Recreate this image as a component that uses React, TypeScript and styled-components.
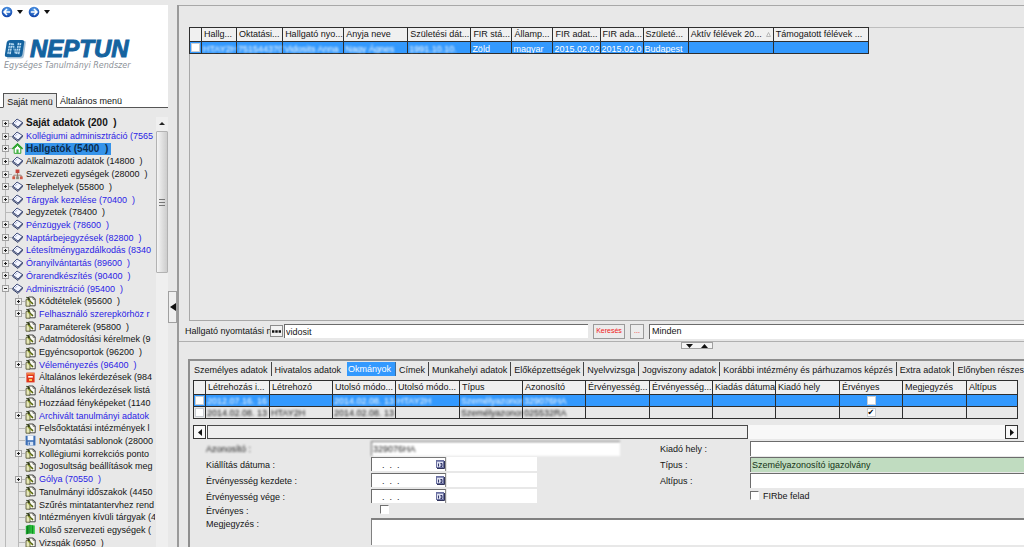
import React from 'react';
import styled, { createGlobalStyle, css } from 'styled-components';

const GlobalStyle = createGlobalStyle`
  * { box-sizing: border-box; }
  html, body { margin: 0; padding: 0; overflow: hidden; }
  body, button, input, select, textarea {
    font-family: "Liberation Sans", Arial, sans-serif;
    font-size: 9px;
    color: #141414;
  }
  body { background: #e8e8e8; }
  button, input, select, textarea { margin: 0; padding: 0; border: 0; border-radius: 0; outline: 0; }
  button { cursor: pointer; background: none; }
`;

const Shell = styled.div`
  display: flex;
  height: 100vh;
  overflow: hidden;
`;

/* ---------- sidebar ---------- */

const Sidebar = styled.aside`
  width: 168px;
  flex: none;
  display: flex;
  flex-direction: column;
  overflow: hidden;
`;

const Brand = styled.header`
  margin-top: 5px;
  height: 88px;
  background: #fff;
`;

const History = styled.div`
  display: flex;
  align-items: center;
  gap: 4px;
  padding: 1px 0 0 1px;
`;

const HistoryButton = styled.button`
  display: flex;
  align-items: center;
  gap: 4px;
  width: 23px;
  height: 12px;
`;

const Logo = styled.div`
  display: flex;
  align-items: center;
  gap: 4px;
  margin: 18px 0 0 4px;
  height: 26px;
`;

const LogoName = styled.span`
  font-size: 24px;
  line-height: 26px;
  font-weight: bold;
  font-style: italic;
  color: #14639f;
  -webkit-text-stroke: 1px #14639f;
`;

const Tagline = styled.div`
  margin-left: 4px;
  font-family: "DejaVu Sans", sans-serif;
  font-size: 8px;
  line-height: 8px;
  font-style: italic;
  color: #8d9299;
  white-space: nowrap;
`;

const MenuTabs = styled.div`
  display: flex;
  height: 15px;
  background: #fff;
  &::before { content: ''; width: 3px; border-bottom: 1px solid #555; }
  &::after { content: ''; flex: 1; border-bottom: 1px solid #555; }
`;

const MenuTab = styled.button<{ $active?: boolean }>`
  padding: 2px 3px 0;
  font-size: 9px;
  line-height: 12px;
  white-space: nowrap;
  border-bottom: 1px solid #555;
  ${p => p.$active && css`
    width: 54px;
    background: #e8e8e8;
    border: 1px solid #555;
    border-bottom-color: #e8e8e8;
  `}
`;

const TreeArea = styled.div`
  display: flex;
  flex: 1;
  min-height: 0;
  padding-top: 9px;
  overflow: hidden;
`;

const Tree = styled.ul`
  display: grid;
  grid-auto-rows: 1fr;
  height: 432px;
  width: 155px;
  margin: 0;
  padding: 0;
  list-style: none;
  overflow: hidden;
  background: linear-gradient(#b9b9b9, #b9b9b9) 5px 6px / 1px 100% no-repeat;
`;

const TreeItem = styled.li<{ $level: number }>`
  display: flex;
  align-items: center;
  min-height: 0;
  padding-left: ${p => (p.$level ? 15 : 2)}px;
  white-space: nowrap;
  ${p => p.$level > 0 && css`background: linear-gradient(#b9b9b9, #b9b9b9) 18px 0 / 1px 100% no-repeat;`}
`;

const Expander = styled.span<{ $kind: string }>`
  display: flex;
  flex: none;
  width: 10px;
  height: 7px;
  ${p => p.$kind === '' && css`
    &::before { content: ''; width: 6px; margin-left: 4px; height: 1px; margin-top: 3px; background: #b9b9b9; }
  `}
`;

const TreeIcon = styled.span`
  display: flex;
  flex: none;
  width: 11px;
  height: 11px;
  margin-right: 2px;
`;

const TreeLabel = styled.a<{ $blue?: boolean; $bold?: boolean; $selected?: boolean }>`
  padding: 0 1px;
  font-size: ${p => (p.$bold ? 10 : 9)}px;
  line-height: 12px;
  font-weight: ${p => (p.$bold ? 'bold' : 'normal')};
  color: ${p => (p.$blue ? '#2a22e6' : '#141414')};
  text-decoration: none;
  white-space: pre;
  ${p => p.$selected && css`padding-right: 3px; background: #3593ea; color: #0b2c4e;`}
`;

const TreeScroll = styled.div`
  display: flex;
  flex-direction: column;
  align-items: center;
  width: 12px;
  margin-left: 1px;
  background: #efefef;
`;

const TreeThumb = styled.div`
  display: flex;
  align-items: center;
  justify-content: center;
  width: 12px;
  height: 142px;
  margin-top: 5px;
  border: 1px solid #b2b2b2;
  border-radius: 1px;
  background: linear-gradient(90deg, #f5f5f5, #dcdcdc 60%, #cdcdcd);
`;

const SplitGutter = styled.div`
  width: 9px;
  flex: none;
  padding-top: 291px;
`;

const SplitButton = styled.button`
  display: flex;
  align-items: center;
  justify-content: center;
  width: 9px;
  height: 32px;
  border: 1px solid #a0a0a0;
  background: #efefef;
`;

/* ---------- main ---------- */

const Main = styled.main`
  flex: 1;
  min-width: 0;
  display: flex;
  flex-direction: column;
  margin-top: 5px;
  border-left: 2px solid #9a9a9a;
  overflow: hidden;
`;

const ResultPane = styled.section`
  flex: 1;
  min-height: 0;
  display: flex;
  flex-direction: column;
  border-top: 1px solid #a8a8a8;
  border-bottom: 1px solid #b0b0b0;
`;

const ResultBox = styled.div`
  flex: 1;
  min-height: 0;
  margin: 21px 0 0 10px;
  border-top: 1px solid #bdbdbd;
  border-left: 1px solid #a8a8a8;
  border-bottom: 1px solid #a8a8a8;
`;

const Grid = styled.table<{ $fill?: boolean }>`
  table-layout: fixed;
  width: ${p => (p.$fill ? '100%' : '680px')};
  margin: ${p => (p.$fill ? '0' : '-1px 0 0 -1px')};
  border-collapse: separate;
  border-spacing: 0;
  border-top: 1px solid #2e2e2e;
  border-left: 1px solid #2e2e2e;
`;

const Th = styled.th`
  height: 14px;
  padding: 0 0 0 2px;
  border-right: 1px solid #2e2e2e;
  border-bottom: 1px solid #2e2e2e;
  background: #f0f0f0;
  font-weight: normal;
  text-align: left;
  line-height: 13px;
  white-space: nowrap;
  overflow: hidden;
`;

const HeadInner = styled.span`
  display: flex;
  align-items: center;
  gap: 4px;
`;

const Tr = styled.tr<{ $selected?: boolean }>`
  background: ${p => (p.$selected ? '#3399fe' : '#e8e8e8')};
  color: ${p => (p.$selected ? '#fff' : '#141414')};
`;

const Td = styled.td`
  height: 12px;
  padding: 0;
  border-right: 1px solid #2e2e2e;
  border-bottom: 1px solid #2e2e2e;
`;

const CellText = styled.div<{ $blur?: boolean; $low?: boolean }>`
  height: 11px;
  padding: ${p => (p.$low ? '2px 0 0 1px' : '1px 0 0 1px')};
  line-height: 11px;
  white-space: nowrap;
  overflow: hidden;
  ${p => p.$blur && css`filter: blur(1px);`}
`;

const CheckCell = styled.div`
  display: flex;
  justify-content: center;
  align-items: center;
  height: 11px;
`;

const Check = styled.input.attrs({ type: 'checkbox' })<{ $sunken?: boolean }>`
  appearance: none;
  display: block;
  width: 9px;
  height: 9px;
  background: #fff;
  border: 1px solid #c9cdd2;
  ${p => p.$sunken && css`
    border-color: #707070 #fff #fff #707070;
  `}
  &:checked::after {
    content: '✔';
    display: block;
    font: 8px/7px "DejaVu Sans", sans-serif;
    color: #000;
  }
`;

const SearchRow = styled.form`
  display: flex;
  align-items: center;
  height: 20px;
  padding-left: 6px;
`;

const SearchLabel = styled.label`
  width: 85px;
  white-space: nowrap;
  line-height: 12px;
`;

const DotsButton = styled.button`
  display: flex;
  align-items: center;
  justify-content: center;
  width: 13px;
  height: 12px;
  margin-right: 1px;
  border: 1px solid #8c8c8c;
  background: #f2f2f2;
`;

const field = css`
  height: 14px;
  border-top: 1px solid #6c6c6c;
  border-left: 1px solid #6c6c6c;
  background: #fff;
  line-height: 13px;
`;

const SearchInput = styled.input`
  ${field}
  width: 304px;
  padding-left: 1px;
`;

const SearchButton = styled.button<{ $wide?: boolean }>`
  width: ${p => (p.$wide ? 32 : 14)}px;
  height: 15px;
  margin-left: 5px;
  border: 1px solid #9a9a9a;
  background: #ececec;
  color: #f01818;
  font-size: 7px;
  line-height: 12px;
  white-space: nowrap;
`;

const ScopeSelect = styled.select`
  ${field}
  appearance: none;
  flex: 1;
  min-width: 0;
  height: 15px;
  margin-left: 5px;
  padding-left: 2px;
`;

const FoldBar = styled.div`
  display: flex;
  height: 7px;
  margin: 0 0 10px 502px;
`;

const FoldButton = styled.button`
  display: flex;
  align-items: center;
  justify-content: center;
  width: 16px;
  height: 7px;
  border: 1px solid #a0a0a0;
  border-right-width: 0;
  background: #f4f4f4;
  & + & { border-left-width: 0; border-right-width: 1px; }
`;

const DetailPane = styled.section`
  margin-left: 9px;
  padding-bottom: 2px;
  border-top: 2px solid #8e8e8e;
  border-left: 2px solid #8e8e8e;
`;

const DetailTabs = styled.nav`
  display: flex;
  height: 19px;
  padding: 1px 0 4px 1px;
  overflow: hidden;
`;

const DetailTab = styled.button<{ $active?: boolean; $bare?: boolean }>`
  flex: none;
  display: flex;
  align-items: center;
  height: 14px;
  padding: 1px 3px 0;
  line-height: 12px;
  white-space: nowrap;
  border-right: 1px solid ${p => (p.$bare ? 'transparent' : '#444')};
  ${p => p.$active && css`
    width: 49px;
    margin-left: 2px;
    padding: 0 0 1px 1px;
    background: #3399fe;
    color: #fff;
    border-right: 1px solid #3c6c9c;
  `}
`;

const DetailBody = styled.div`
  padding: 0 6px 0 3px;
`;

const HScroll = styled.div`
  display: flex;
  height: 14px;
  margin: 6px 6px 2px 3px;
  background: #f8f8f8;
`;

const HScrollButton = styled.button`
  display: flex;
  align-items: center;
  justify-content: center;
  width: 13px;
  height: 14px;
  border: 1px solid #333;
  background: #f8f8f8;
`;

const HScrollTrack = styled.div`
  flex: 1;
  padding-right: 257px;
`;

const HScrollThumb = styled.div`
  height: 14px;
  margin-left: 1px;
  border: 1px solid #4a4a4a;
  background: #efefef;
`;

const Form = styled.form`
  display: grid;
  grid-template-columns: 454px 1fr;
  padding-left: 16px;
`;

const FormColumn = styled.div`
  display: flex;
  flex-direction: column;
`;

const FormRow = styled.div<{ $wide?: boolean; $tight?: boolean }>`
  display: flex;
  align-items: flex-start;
  height: ${p => (p.$wide ? 27 : p.$tight ? 13 : 16)}px;
  ${p => p.$wide && css`grid-column: 1 / -1;`}
`;

const FormLabel = styled.label<{ $right?: boolean; $blur?: boolean; $flush?: boolean }>`
  flex: none;
  width: ${p => (p.$right ? 90 : 165)}px;
  padding-top: ${p => (p.$flush ? 0 : 2)}px;
  line-height: 13px;
  white-space: nowrap;
  ${p => p.$blur && css`filter: blur(1px);`}
`;

const TextField = styled.input<{ $green?: boolean; $blur?: boolean; $width?: number }>`
  ${field}
  ${p => (p.$width ? css`width: ${p.$width}px;` : css`flex: 1; min-width: 0;`)}
  height: 15px;
  padding-left: 1px;
  ${p => p.$green && css`background: #c0dcc0; color: #143214;`}
  ${p => p.$blur && css`filter: blur(1px);`}
`;

const DateField = styled.span`
  ${field}
  display: flex;
  align-items: center;
  width: 75px;
  border-right: 1px solid #8a8a8a;
`;

const DateInput = styled.input`
  flex: 1;
  min-width: 0;
  padding-left: 10px;
  background: transparent;
`;

const CalendarButton = styled.button`
  display: flex;
  width: 9px;
  height: 9px;
`;

const DateNote = styled.output`
  width: 90px;
  height: 14px;
  margin-left: 1px;
  background: #fff;
`;

const CheckLabel = styled.label`
  display: flex;
  align-items: center;
  gap: 4px;
  height: 13px;
`;

const CheckSlot = styled.div`
  padding: 0 0 0 9px;
`;

const Notes = styled.textarea`
  ${field}
  flex: 1;
  min-width: 0;
  height: 27px;
  resize: none;
  border-top-width: 2px;
  border-color: #808080;
`;

/* ---------- drawings ---------- */

const Arrow = ({ dir, w = 6, h = 4 }: { dir: 'up' | 'down' | 'left' | 'right'; w?: number; h?: number }) => {
  const points = {
    up: `0,${h} ${w},${h} ${w / 2},0`,
    down: `0,0 ${w},0 ${w / 2},${h}`,
    left: `${w},0 ${w},${h} 0,${h / 2}`,
    right: `0,0 0,${h} ${w},${h / 2}`,
  }[dir];
  return <svg width={w} height={h}><polygon points={points} fill="#111" /></svg>;
};

const BallArrow = ({ flip }: { flip?: boolean }) => (
  <svg width="12" height="12" viewBox="0 0 12 12">
    <defs>
      <radialGradient id={flip ? 'ballB' : 'ballA'} cx="50%" cy="30%" r="70%">
        <stop offset="0" stopColor="#5aa6f0" />
        <stop offset="1" stopColor="#0c3fa8" />
      </radialGradient>
    </defs>
    <circle cx="6" cy="6" r="5.3" fill={`url(#${flip ? 'ballB' : 'ballA'})`} />
    <path
      transform={flip ? 'translate(12 0) scale(-1 1)' : undefined}
      d="M6 3 L3 6 L6 9 M3.2 6 H9.2" stroke="#fff" strokeWidth="1.5" fill="none"
    />
  </svg>
);

const LogoMark = () => (
  <svg width="22" height="20" viewBox="0 0 22 20">
    <path d="M5 2 H21 Q22 2 21.8 4 L20 17 Q19.7 19.5 17 19.5 H3 Z" fill="#a9c3d8" />
    <path d="M6 1 H18 Q20.6 1 20.2 3.5 L18.4 15.5 Q18 18 15.5 18 H3 Q.5 18 .9 15.5 L2.7 3.5 Q3.2 1 6 1 Z" fill="#14639f" />
    <path d="M7 4 L5 15 M15.6 4 L13.6 15" stroke="#bfe0f5" strokeWidth="3.6" fill="none" />
    <path d="M8.6 4.6 L12 14.4" stroke="#a6d0ec" strokeWidth="2.4" fill="none" />
    <path d="M3 6.5 H18 M3 9.3 H18 M3 12.1 H18" stroke="#14639f" strokeWidth=".7" />
    <path d="M7 3.6 L4.8 15.4 M11.4 3.6 L9.2 15.4 M15.7 3.6 L13.5 15.4" stroke="#14639f" strokeWidth=".6" />
  </svg>
);

const icons: Record<string, React.ReactNode> = {
  book: (
    <>
      <path d="M.8 5.2 L5 1 L10.4 4.4 L6 9 Z" fill="#f4f6ff" stroke="#43507c" strokeWidth="1" />
      <path d="M.8 5.2 V6.6 L6 10.4 L10.4 5.8 V4.4" fill="none" stroke="#27345f" strokeWidth="1" />
      <path d="M3 5.2 L5.3 2.9" stroke="#9aa6d0" strokeWidth=".8" />
    </>
  ),
  home: (
    <>
      <path d="M2.2 5.5 V10.3 H8.8 V5.5 L5.5 2.5 Z" fill="#fff" stroke="#2fa32f" strokeWidth="1" />
      <path d="M.4 6 L5.5 1 L10.6 6" fill="none" stroke="#23a023" strokeWidth="1.5" />
      <rect x="4.4" y="6.4" width="2.2" height="4" fill="#4ab84a" />
    </>
  ),
  org: (
    <>
      <rect x="3.6" y=".5" width="3.8" height="3.6" fill="#c4433a" />
      <path d="M5.5 4 V6.2 M1.8 8 V6.2 H9.2 V8 M5.5 6 V8" stroke="#8a6a5a" fill="none" strokeWidth=".8" />
      <rect x=".3" y="7.4" width="2.8" height="2.8" fill="#d05a48" />
      <rect x="4.1" y="7.4" width="2.8" height="2.8" fill="#8a8a7a" />
      <rect x="7.9" y="7.4" width="2.8" height="2.8" fill="#d05a48" />
    </>
  ),
  doc: (
    <>
      <path d="M3.6 1 H8.2 L10.2 3 V9.8 H3.6 Z" fill="#fbfbf2" stroke="#333" strokeWidth=".9" />
      <path d="M8 1 V3.2 H10.2" fill="none" stroke="#333" strokeWidth=".7" />
      <path d="M1 3.6 H5 V10.2 H1 Z" fill="#e6e8b8" stroke="#4a4a2a" strokeWidth=".8" />
      <path d="M1.4 1.4 L4 2.4 L3.8 4.4 L8 7.8" fill="none" stroke="#2e3a10" strokeWidth="1.5" />
      <path d="M3.4 4 L7.4 8.2" stroke="#b8c832" strokeWidth="1" />
    </>
  ),
  red: (
    <>
      <rect x="1.4" y=".6" width="8.2" height="9.8" fill="#e0351c" />
      <rect x="2" y="1" width="7" height="1.6" fill="#f28a4a" />
      <rect x="3.2" y="4" width="4.6" height="1.6" fill="#fff" />
      <rect x="4" y="7" width="3" height="2" fill="#ffc24a" />
    </>
  ),
  disk: (
    <>
      <path d="M.6 .8 H10.4 V10.4 H1.8 L.6 9.2 Z" fill="#3d6fb5" />
      <rect x="2.6" y=".8" width="5.8" height="4.4" fill="#f4f8ff" />
      <rect x="2.8" y="6.8" width="5.4" height="3.6" fill="#d5e2f4" />
      <rect x="3.6" y="7.4" width="1.4" height="2.4" fill="#3d6fb5" />
    </>
  ),
  green: (
    <>
      <path d="M.8 2 L4.6 .8 V9.6 L.8 10.4 Z" fill="#19a52c" />
      <path d="M4.6 .8 L9.8 1.6 V10 L4.6 9.6 Z" fill="#2cc43e" />
      <path d="M2.6 1.6 V10 M4.8 1 V9.6 M7.4 1.4 V9.8" stroke="#0c6a1a" strokeWidth=".7" />
    </>
  ),
};

const Icon = ({ name }: { name: string }) => (
  <svg width="11" height="11" viewBox="0 0 11 11">{icons[name]}</svg>
);

const ExpanderMark = ({ kind }: { kind: string }) =>
  kind ? (
    <svg width="10" height="7" viewBox="0 0 10 7">
      <rect x=".5" y=".5" width="6" height="6" fill="#f0f0f0" stroke="#a0a0a0" />
      <path d={kind === '+' ? 'M2 3.5 H5 M3.5 2 V5' : 'M2 3.5 H5'} stroke="#222" />
      <path d="M7 3.5 H10" stroke="#b9b9b9" />
    </svg>
  ) : null;

const Calendar = () => (
  <svg width="9" height="9" viewBox="0 0 9 9">
    <rect x=".5" y=".5" width="7" height="7" fill="#dfe2f2" stroke="#6a70a0" />
    <path d="M1 1.5 H7" stroke="#8a90ba" />
    <path d="M2.5 3.5 V6.5 M4.4 3.5 H6 V6.5 H4.4 M4.6 5 H6" stroke="#20245a" fill="none" strokeWidth=".9" />
    <path d="M8.5 1 V8.5 H1" stroke="#30335a" fill="none" />
  </svg>
);

/* ---------- data ---------- */

type Node = { t: string; icon?: string; x?: string; blue?: boolean; bold?: boolean; sel?: boolean; sub?: boolean };

const nodes: Node[] = [
  { t: 'Saját adatok (200  )', x: '+', bold: true },
  { t: 'Kollégiumi adminisztráció (7565', x: '+', blue: true },
  { t: 'Hallgatók (5400  )', x: '+', bold: true, sel: true, icon: 'home' },
  { t: 'Alkalmazotti adatok (14800  )', x: '+' },
  { t: 'Szervezeti egységek (28000  )', x: '+', icon: 'org' },
  { t: 'Telephelyek (55800  )', x: '+' },
  { t: 'Tárgyak kezelése (70400  )', x: '+', blue: true },
  { t: 'Jegyzetek (78400  )' },
  { t: 'Pénzügyek (78600  )', x: '+', blue: true },
  { t: 'Naptárbejegyzések (82800  )', x: '+', blue: true },
  { t: 'Létesítménygazdálkodás (8340', x: '+', blue: true },
  { t: 'Óranyilvántartás (89600  )', x: '+', blue: true },
  { t: 'Órarendkészítés (90400  )', x: '+', blue: true },
  { t: 'Adminisztráció (95400  )', x: '-', blue: true },
  { t: 'Kódtételek (95600  )', x: '+', sub: true },
  { t: 'Felhasználó szerepkörhöz r', x: '+', blue: true, sub: true },
  { t: 'Paraméterek (95800  )', sub: true },
  { t: 'Adatmódosítási kérelmek (9', sub: true },
  { t: 'Egyéncsoportok (96200  )', sub: true },
  { t: 'Véleményezés (96400  )', x: '+', blue: true, sub: true },
  { t: 'Általános lekérdezések (984', icon: 'red', sub: true },
  { t: 'Általános lekérdezések listá', sub: true },
  { t: 'Hozzáad fényképeket (1140', sub: true },
  { t: 'Archivált tanulmányi adatok', x: '+', blue: true, sub: true },
  { t: 'Felsőoktatási intézmények l', sub: true },
  { t: 'Nyomtatási sablonok (28000', icon: 'disk', sub: true },
  { t: 'Kollégiumi korrekciós ponto', x: '+', sub: true },
  { t: 'Jogosultság beállítások meg', sub: true },
  { t: 'Gólya (70550  )', x: '+', blue: true, sub: true },
  { t: 'Tanulmányi időszakok (4450', sub: true },
  { t: 'Szűrés mintatantervhez rend', sub: true },
  { t: 'Intézményen kívüli tárgyak (4', sub: true },
  { t: 'Külső szervezeti egységek (', icon: 'green', sub: true },
  { t: 'Vizsgák (6950  )', sub: true },
];

const studentCols: [string, number][] = [
  ['Hallg...', 35], ['Oktatási...', 46], ['Hallgató nyo...', 61], ['Anyja neve', 64],
  ['Születési dát...', 63], ['FIR stá...', 41], ['Államp...', 41], ['FIR adat...', 47],
  ['FIR ada...', 43], ['Születé...', 45], ['Aktív félévek 20...', 85], ['Támogatott félévek ...', 95],
];
const student = ['HTAY2H', '751544370', 'Vidosits Anna', 'Nagy Ágnes', '1991.10.10.', 'Zöld', 'magyar', '2015.02.02', '2015.02.0', 'Budapest', '', ''];

const documentCols: [string, number | undefined][] = [
  ['Létrehozás i...', 64], ['Létrehozó', 63], ['Utolsó módo...', 63], ['Utolsó módo...', 64],
  ['Típus', 63], ['Azonosító', 63], ['Érvényesség...', 64], ['Érvényesség...', 63],
  ['Kiadás dátuma', 63], ['Kiadó hely', 64], ['Érvényes', 63], ['Megjegyzés', 64], ['Altípus', undefined],
];
const documents = [
  { selected: true, valid: false, cells: ['2012.07.16. 16', '', '2014.02.08. 13', 'HTAY2H', 'Személyazonos', '329076HA'] },
  { selected: false, valid: true, cells: ['2014.02.08. 13', 'HTAY2H', '2014.02.08. 13', '', 'Személyazonos', '025532RA'] },
];

const detailTabs = [
  'Személyes adatok', 'Hivatalos adatok', 'Okmányok', 'Címek', 'Munkahelyi adatok', 'Előképzettségek',
  'Nyelvvizsga', 'Jogviszony adatok', 'Korábbi intézmény és párhuzamos képzés', 'Extra adatok', 'Előnyben részesítés',
];

const dateRows = ['Kiállítás dátuma :', 'Érvényesség kezdete :', 'Érvényesség vége :'];

export default function App() {
  return (
    <Shell>
      <GlobalStyle />
      <Sidebar>
        <Brand>
          <History>
            <HistoryButton aria-label="Vissza"><BallArrow /><Arrow dir="down" /></HistoryButton>
            <HistoryButton aria-label="Előre"><BallArrow flip /><Arrow dir="down" /></HistoryButton>
          </History>
          <Logo><LogoMark /><LogoName>NEPTUN</LogoName></Logo>
          <Tagline>Egységes Tanulmányi Rendszer</Tagline>
        </Brand>
        <MenuTabs>
          <MenuTab $active>Saját menü</MenuTab>
          <MenuTab>Általános menü</MenuTab>
        </MenuTabs>
        <TreeArea>
          <Tree>
            {nodes.map((n, i) => (
              <TreeItem key={i} $level={n.sub ? 1 : 0}>
                <Expander $kind={n.x ?? ''}><ExpanderMark kind={n.x ?? ''} /></Expander>
                <TreeIcon><Icon name={n.icon ?? (n.sub ? 'doc' : 'book')} /></TreeIcon>
                <TreeLabel href="#" $blue={n.blue} $bold={n.bold} $selected={n.sel}>{n.t}</TreeLabel>
              </TreeItem>
            ))}
          </Tree>
          <TreeScroll>
            <svg width="6" height="9"><polygon points="0,8 6,8 3,5" fill="#222" /></svg>
            <TreeThumb>
              <svg width="6" height="7"><path d="M0 .5 H6 M0 3.5 H6 M0 6.5 H6" stroke="#777" /></svg>
            </TreeThumb>
          </TreeScroll>
        </TreeArea>
      </Sidebar>
      <SplitGutter>
        <SplitButton aria-label="Menü elrejtése"><Arrow dir="left" w={6} h={8} /></SplitButton>
      </SplitGutter>
      <Main>
        <ResultPane>
          <ResultBox>
            <Grid>
              <colgroup>
                <col width={12} />
                {studentCols.map(([, w], i) => <col key={i} width={w} />)}
              </colgroup>
              <thead>
                <tr>
                  <Th />
                  {studentCols.map(([name], i) => (
                    <Th key={i}>
                      <HeadInner>
                        {name}
                        {i === 10 && <svg width="5" height="5"><path d="M.5 4.5 H4.5 L2.5 .5 Z" fill="none" stroke="#aaa" strokeWidth=".8" /></svg>}
                      </HeadInner>
                    </Th>
                  ))}
                </tr>
              </thead>
              <tbody>
                <Tr $selected>
                  <Td><CheckCell><Check aria-label="Kijelölés" /></CheckCell></Td>
                  {student.map((c, i) => <Td key={i}><CellText $low $blur={i < 5}>{c}</CellText></Td>)}
                </Tr>
              </tbody>
            </Grid>
          </ResultBox>
          <SearchRow>
            <SearchLabel htmlFor="q">Hallgató nyomtatási n</SearchLabel>
            <DotsButton type="button" aria-label="Mező választása">
              <svg width="9" height="3"><path d="M0 1.5 H2.4 M3.3 1.5 H5.7 M6.6 1.5 H9" stroke="#111" strokeWidth="2.4" /></svg>
            </DotsButton>
            <SearchInput id="q" defaultValue="vidosit" />
            <SearchButton type="button" $wide>Keresés</SearchButton>
            <SearchButton type="button">...</SearchButton>
            <ScopeSelect aria-label="Szűrés"><option>Minden</option></ScopeSelect>
          </SearchRow>
        </ResultPane>
        <FoldBar>
          <FoldButton aria-label="Le"><Arrow dir="down" w={7} h={4} /></FoldButton>
          <FoldButton aria-label="Fel"><Arrow dir="up" w={7} h={4} /></FoldButton>
        </FoldBar>
        <DetailPane>
          <DetailTabs>
            {detailTabs.map((t, i) => (
              <DetailTab key={t} $active={i === 2} $bare={i === 1}>{t}</DetailTab>
            ))}
          </DetailTabs>
          <DetailBody>
            <Grid $fill>
              <colgroup>
                <col width={12} />
                {documentCols.map(([, w], i) => <col key={i} width={w} />)}
              </colgroup>
              <thead>
                <tr><Th />{documentCols.map(([name], i) => <Th key={i}>{name}</Th>)}</tr>
              </thead>
              <tbody>
                {documents.map((d, r) => (
                  <Tr key={r} $selected={d.selected}>
                    <Td><CheckCell><Check aria-label="Kijelölés" /></CheckCell></Td>
                    {documentCols.map((_, i) => (
                      <Td key={i}>
                        {i === 10
                          ? <CheckCell><Check aria-label="Érvényes" defaultChecked={d.valid} /></CheckCell>
                          : <CellText $blur>{d.cells[i]}</CellText>}
                      </Td>
                    ))}
                  </Tr>
                ))}
              </tbody>
            </Grid>
          </DetailBody>
          <HScroll>
            <HScrollButton aria-label="Balra"><Arrow dir="left" w={4} h={7} /></HScrollButton>
            <HScrollTrack><HScrollThumb /></HScrollTrack>
            <HScrollButton aria-label="Jobbra"><Arrow dir="right" w={4} h={7} /></HScrollButton>
          </HScroll>
          <Form>
            <FormColumn>
              <FormRow>
                <FormLabel htmlFor="azon" $blur>Azonosító :</FormLabel>
                <TextField id="azon" $blur $width={249} defaultValue="329076HA" />
              </FormRow>
              {dateRows.map((label, i) => (
                <FormRow key={label}>
                  <FormLabel htmlFor={`d${i}`}>{label}</FormLabel>
                  <DateField>
                    <DateInput id={`d${i}`} defaultValue=".  .  ." />
                    <CalendarButton type="button" aria-label="Naptár"><Calendar /></CalendarButton>
                  </DateField>
                  <DateNote />
                </FormRow>
              ))}
              <FormRow $tight>
                <FormLabel htmlFor="erv" $flush>Érvényes :</FormLabel>
                <CheckSlot><Check id="erv" $sunken /></CheckSlot>
              </FormRow>
            </FormColumn>
            <FormColumn>
              <FormRow>
                <FormLabel $right htmlFor="hely">Kiadó hely :</FormLabel>
                <TextField id="hely" />
              </FormRow>
              <FormRow>
                <FormLabel $right htmlFor="tipus">Típus :</FormLabel>
                <TextField id="tipus" $green defaultValue="Személyazonosító igazolvány" />
              </FormRow>
              <FormRow>
                <FormLabel $right htmlFor="altipus">Altípus :</FormLabel>
                <TextField id="altipus" />
              </FormRow>
              <FormRow>
                <FormLabel as="span" $right />
                <CheckLabel><Check $sunken />FIRbe felad</CheckLabel>
              </FormRow>
            </FormColumn>
            <FormRow $wide>
              <FormLabel htmlFor="megj" $flush>Megjegyzés :</FormLabel>
              <Notes id="megj" />
            </FormRow>
          </Form>
        </DetailPane>
      </Main>
    </Shell>
  );
}
